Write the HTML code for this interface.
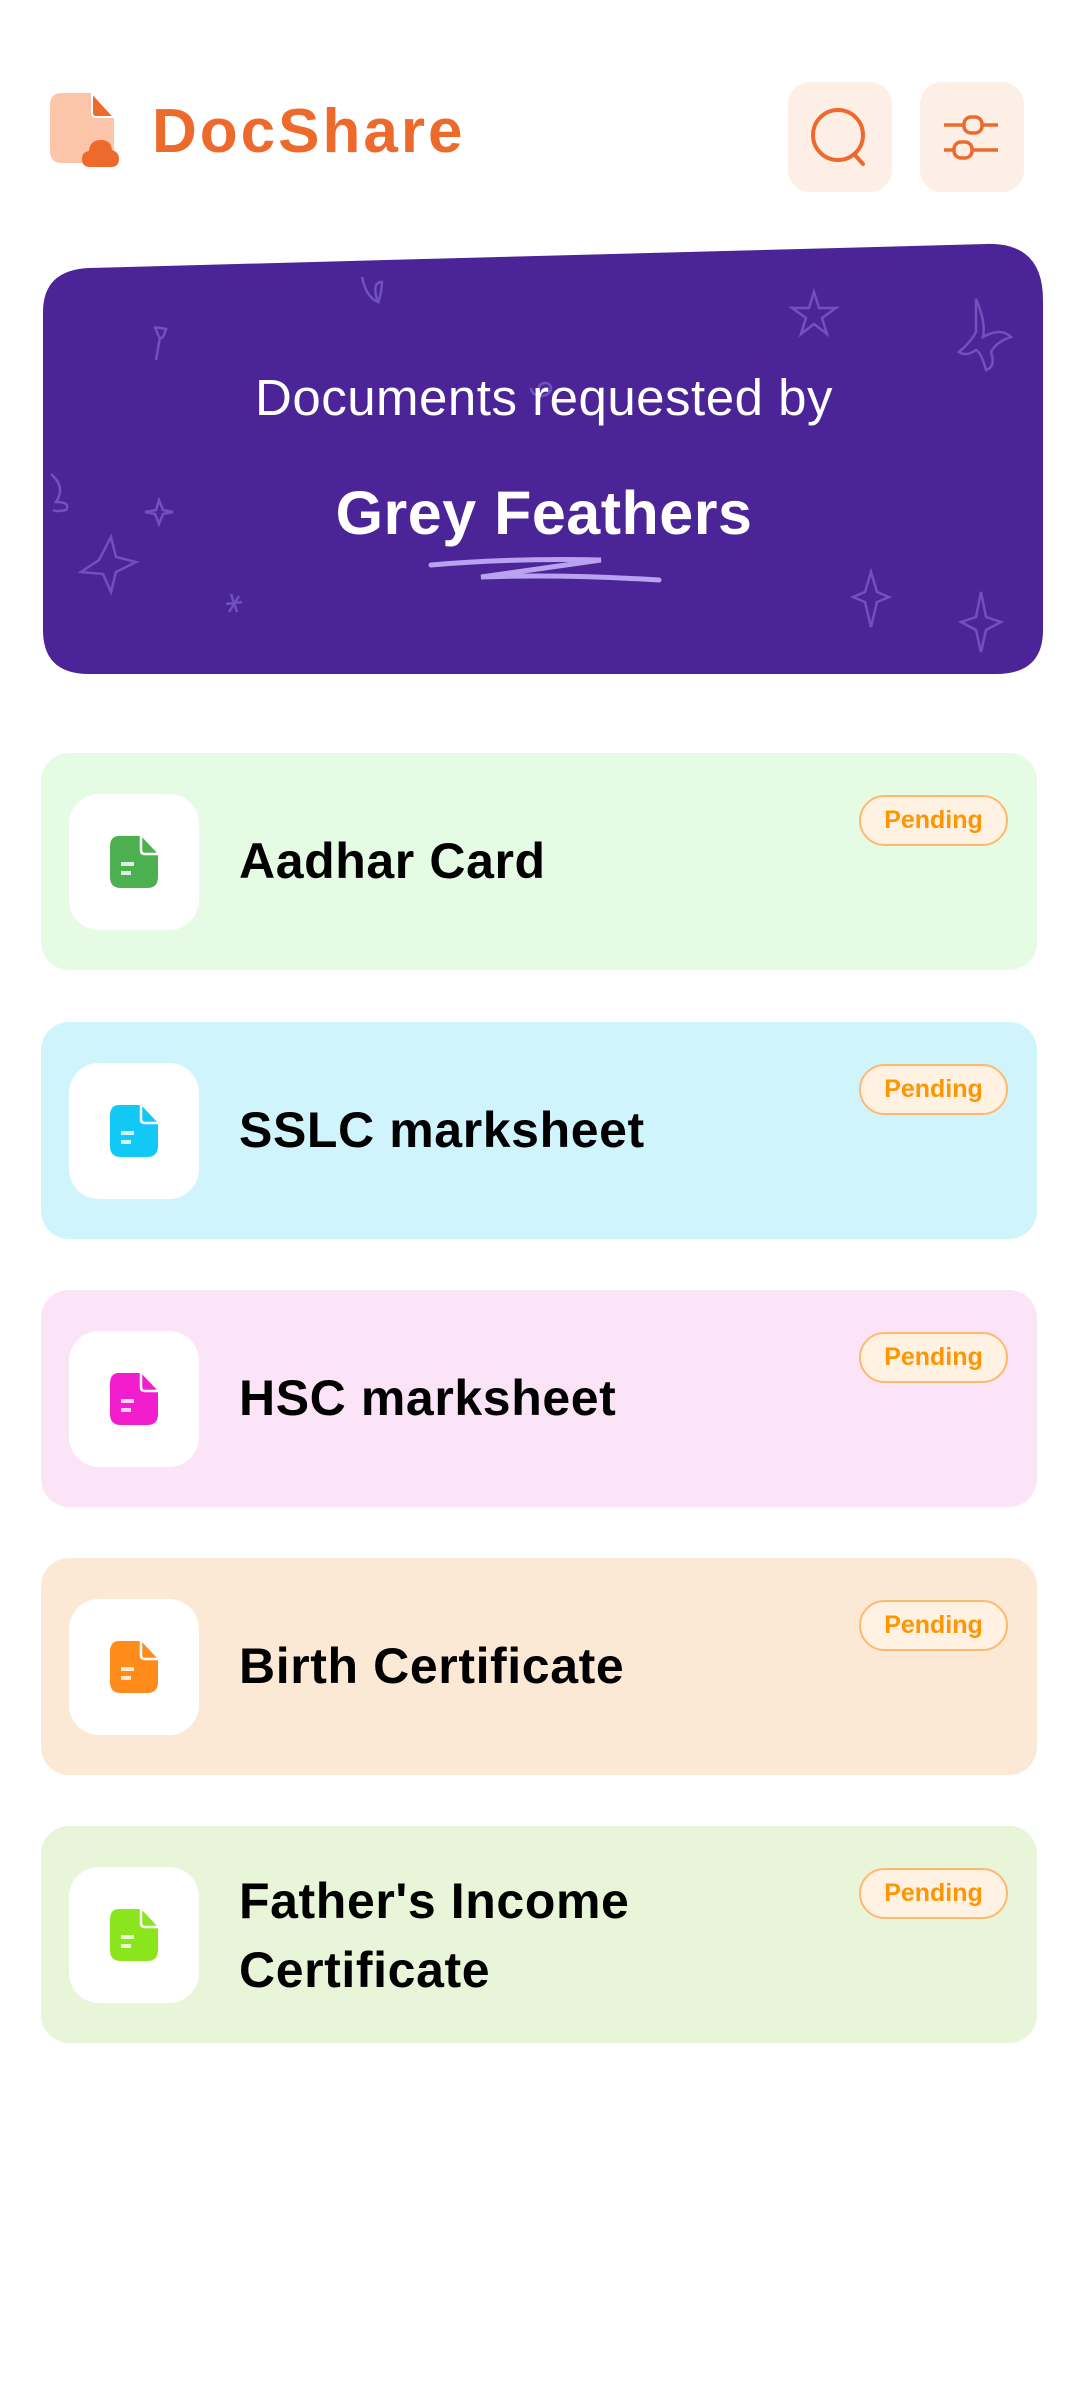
<!DOCTYPE html>
<html><head><meta charset="utf-8"><style>
*{margin:0;padding:0;box-sizing:border-box}
body{width:1080px;height:2398px;background:#fff;font-family:"Liberation Sans",sans-serif;position:relative;overflow:hidden}
.abs{position:absolute}
.btn{position:absolute;top:82px;width:104px;height:110px;background:#FDEEE6;border-radius:22px}
.card{position:absolute;left:41px;width:996px;height:217px;border-radius:28px}
.ib{position:absolute;left:28px;top:41px;width:130px;height:136px;background:#fff;border-radius:30px}
.ib svg{position:absolute;left:40px;top:41px}
.t{position:absolute;left:198px;font-weight:bold;font-size:50px;color:#000;line-height:69px;letter-spacing:0.6px}
.p{position:absolute;left:818px;top:42px;width:149px;height:51px;border:2px solid #FFB870;background:#FFF2E3;border-radius:26px;color:#FF9500;font-weight:bold;font-size:25px;text-align:center;line-height:47px}
</style></head><body>
<svg class="abs" style="left:48px;top:90px" width="74" height="80" viewBox="0 0 74 80">
<path d="M14 3 H44 L66 27 V58 Q66 73 52 73 H14 Q2 73 2 61 V15 Q2 3 14 3Z" fill="#FCC4A8"/>
<path d="M44 3 L66 27 H48 Q44 27 44 23Z" fill="#EE6A2C" stroke="#fff" stroke-width="2"/>
<path d="M42 77 Q34 77 34 69 Q34 62 41 61 Q42 50 53 50 Q63 50 64 60 Q71 62 71 69 Q71 77 63 77Z" fill="#EE6A2C"/>
</svg>
<div class="abs" style="left:152px;top:92px;font-size:62px;font-weight:bold;color:#EE6A2C;letter-spacing:3px;line-height:80px">DocShare</div>
<div class="btn" style="left:788px"><svg width="104" height="110" viewBox="0 0 104 110"><circle cx="50" cy="53" r="25" fill="none" stroke="#EE6A2C" stroke-width="4"/><path d="M66 72 L75 82" stroke="#EE6A2C" stroke-width="4" stroke-linecap="round"/></svg></div>
<div class="btn" style="left:920px"><svg width="104" height="110" viewBox="0 0 104 110" fill="none" stroke="#EE6A2C" stroke-width="3.5"><path d="M24 43 H78 M24 68 H78"/><rect x="44" y="35" width="18" height="16" rx="7" fill="#FDEEE6"/><rect x="34" y="60" width="18" height="16" rx="7" fill="#FDEEE6"/></svg></div>
<svg class="abs" style="left:41px;top:242px" width="1004" height="436" viewBox="0 0 1004 436">
<path d="M2 70 Q2 28 48 26 L945 2 Q1002 0 1002 58 V388 Q1002 432 955 432 H48 Q2 432 2 388Z" fill="#4B2597"/>
<g fill="none" stroke="#7A5CC4" stroke-width="2.5" opacity=".8">
<path d="M115 268 L118 258 L122 268 L132 270 L122 272 L118 282 L114 272 L104 270Z"/>
<path d="M115 87 Q120 105 125 87 Q110 84 115 87 M119 95 L115 118"/>
<path d="M321 35 Q325 55 337 60 Q330 40 341 40 Q340 55 337 60"/>
<path d="M500 146 m-10 0 a10 8 0 1 0 20 0 a6 5 0 1 0 -12 0"/>
<path d="M773 50 L778 66 L795 66 L781 76 L786 92 L773 82 L760 92 L765 76 L751 66 L768 66Z"/>
<path d="M935 57 Q945 80 942 95 Q960 85 970 95 Q955 100 950 110 Q955 125 945 128 Q940 110 935 108 Q925 115 918 110 Q930 100 935 90Z"/>
<path d="M10 232 Q25 245 15 260 Q30 260 25 268 Q15 270 12 268"/>
<path d="M70 295 L75 315 L95 320 L75 330 L70 350 L62 332 L40 330 L58 318Z"/>
<path d="M190 352 L196 370 M185 362 L201 360 M188 370 L198 354"/>
<path d="M830 330 L836 350 L848 355 L836 360 L830 385 L824 360 L812 355 L824 350Z"/>
<path d="M940 350 L945 375 L960 380 L945 388 L940 410 L935 388 L920 380 L935 375Z"/>
</g>
<path d="M390 323 Q470 316 560 318 L440 335 Q520 332 618 338" fill="none" stroke="#B9A3F0" stroke-width="5" stroke-linecap="round"/>
</svg>
<div class="abs" style="left:0;width:1088px;top:368px;text-align:center;color:#fff;font-size:51px;line-height:60px;letter-spacing:0.5px">Documents requested by</div>
<div class="abs" style="left:0;width:1088px;top:478px;text-align:center;color:#fff;font-size:61px;font-weight:bold;line-height:70px;letter-spacing:0.5px">Grey Feathers</div>

<div class="card" style="top:753px;background:#E5FBE4"><div class="ib"><svg width="50" height="54" viewBox="0 0 50 54"><path d="M10 1 H32 L49 19 V42 Q49 53 38 53 H12 Q1 53 1 42 V12 Q1 1 10 1Z" fill="#4CAF50"/><path d="M32 1 V15 Q32 19 36 19 H49" fill="none" stroke="#fff" stroke-width="2.5"/><rect x="12" y="27" width="13" height="4" fill="#fff" opacity=".8"/><rect x="12" y="36" width="10" height="4" fill="#fff" opacity=".8"/></svg></div><div class="t" style="top:74px">Aadhar Card</div><div class="p">Pending</div></div>

<div class="card" style="top:1022px;background:#D0F4FC"><div class="ib"><svg width="50" height="54" viewBox="0 0 50 54"><path d="M10 1 H32 L49 19 V42 Q49 53 38 53 H12 Q1 53 1 42 V12 Q1 1 10 1Z" fill="#12C9F5"/><path d="M32 1 V15 Q32 19 36 19 H49" fill="none" stroke="#fff" stroke-width="2.5"/><rect x="12" y="27" width="13" height="4" fill="#fff" opacity=".8"/><rect x="12" y="36" width="10" height="4" fill="#fff" opacity=".8"/></svg></div><div class="t" style="top:74px">SSLC marksheet</div><div class="p">Pending</div></div>

<div class="card" style="top:1290px;background:#FBE4F7"><div class="ib"><svg width="50" height="54" viewBox="0 0 50 54"><path d="M10 1 H32 L49 19 V42 Q49 53 38 53 H12 Q1 53 1 42 V12 Q1 1 10 1Z" fill="#F21DCD"/><path d="M32 1 V15 Q32 19 36 19 H49" fill="none" stroke="#fff" stroke-width="2.5"/><rect x="12" y="27" width="13" height="4" fill="#fff" opacity=".8"/><rect x="12" y="36" width="10" height="4" fill="#fff" opacity=".8"/></svg></div><div class="t" style="top:74px">HSC marksheet</div><div class="p">Pending</div></div>

<div class="card" style="top:1558px;background:#FCE9D5"><div class="ib"><svg width="50" height="54" viewBox="0 0 50 54"><path d="M10 1 H32 L49 19 V42 Q49 53 38 53 H12 Q1 53 1 42 V12 Q1 1 10 1Z" fill="#FF8C1A"/><path d="M32 1 V15 Q32 19 36 19 H49" fill="none" stroke="#fff" stroke-width="2.5"/><rect x="12" y="27" width="13" height="4" fill="#fff" opacity=".8"/><rect x="12" y="36" width="10" height="4" fill="#fff" opacity=".8"/></svg></div><div class="t" style="top:74px">Birth Certificate</div><div class="p">Pending</div></div>

<div class="card" style="top:1826px;background:#E8F5D8"><div class="ib"><svg width="50" height="54" viewBox="0 0 50 54"><path d="M10 1 H32 L49 19 V42 Q49 53 38 53 H12 Q1 53 1 42 V12 Q1 1 10 1Z" fill="#8BE51C"/><path d="M32 1 V15 Q32 19 36 19 H49" fill="none" stroke="#fff" stroke-width="2.5"/><rect x="12" y="27" width="13" height="4" fill="#fff" opacity=".8"/><rect x="12" y="36" width="10" height="4" fill="#fff" opacity=".8"/></svg></div><div class="t" style="top:41px">Father's Income<br>Certificate</div><div class="p">Pending</div></div>
</body></html>
